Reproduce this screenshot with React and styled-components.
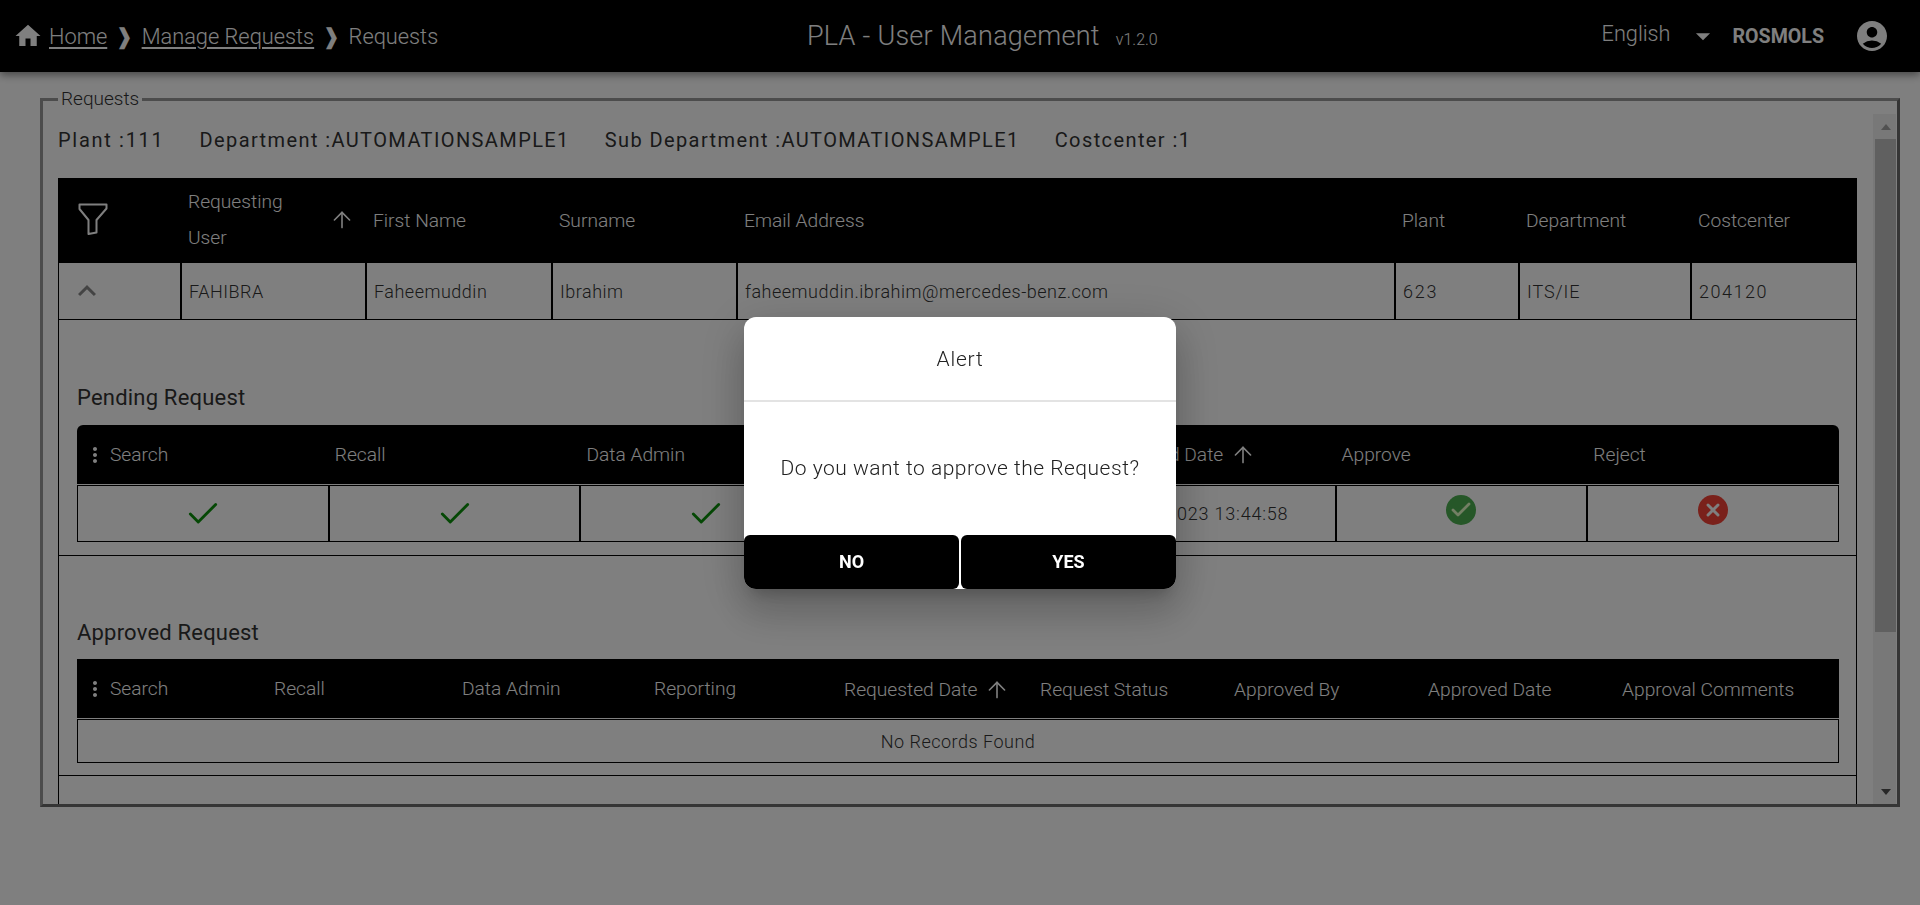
import React from 'react';
import styled, { createGlobalStyle } from 'styled-components';
import { MdHome, MdArrowDropDown, MdAccountCircle, MdExpandLess, MdMoreVert } from 'react-icons/md';
import { ArrowUp, Check, X } from 'lucide-react';

const GlobalStyle = createGlobalStyle`
  html, body {
    margin: 0;
    height: 100%;
    overflow: hidden;
    background: #fff;
  }
  * {
    box-sizing: border-box;
  }
  body {
    font-family: Roboto, "Liberation Sans", sans-serif;
    font-weight: 300;
    color: #333;
  }
`;

const TopBar = styled.header`
  height: 72px;
  background: #000;
  color: #fff;
  display: flex;
  align-items: center;
  box-shadow: 0 3px 8px rgba(0, 0, 0, 0.45);
  position: relative;
`;

const Crumbs = styled.nav`
  flex: 0 0 807px;
  display: flex;
  align-items: center;
  padding-left: 13px;
  font-size: 21.8px;
`;

const CrumbLink = styled.a`
  color: inherit;
  text-decoration: underline;
  text-decoration-thickness: 2px;
  text-underline-offset: 3px;
  margin-left: ${(p) => p.$gap || 0}px;
`;

const CrumbSep = styled.span`
  font-family: "DejaVu Sans", sans-serif;
  font-size: 22px;
  margin: 0 8.2px;
`;

const AppTitle = styled.div`
  display: flex;
  align-items: baseline;
  font-size: 27px;
  letter-spacing: 0.25px;
  white-space: nowrap;
`;

const Version = styled.span`
  font-size: 16px;
  letter-spacing: 0;
  margin-left: 16px;
`;

const UserArea = styled.div`
  margin-left: auto;
  display: flex;
  align-items: center;
  padding-right: 30px;
`;

const Lang = styled.span`
  font-size: 21.7px;
  margin-bottom: 6px;
`;

const LangCaret = styled(MdArrowDropDown)`
  margin-left: 15px;
`;

const UserName = styled.span`
  font-size: 19.6px;
  font-weight: 700;
  margin: 0 30px 0 13px;
`;

const Page = styled.main`
  padding: 17px 20px 0 40px;
`;

const Frame = styled.fieldset`
  margin: 0;
  padding: 0 1px 0 15px;
  height: 718px;
  min-width: 0;
  border-width: 3px;
  border-style: solid;
  border-color: #999 #6a6a6a #6a6a6a #999;
`;

const FrameTitle = styled.legend`
  padding: 0 3px;
  font-size: 19px;
  line-height: 20px;
`;

const FrameBody = styled.div`
  display: flex;
  height: 690px;
  margin-top: 5px;
`;

const ScrollArea = styled.div`
  flex: 1;
  min-width: 0;
  overflow: hidden;
  padding-right: 16px;
`;

const ScrollTrack = styled.div`
  flex: 0 0 23px;
  display: flex;
  flex-direction: column;
  align-items: stretch;
  background: #f1f1f1;
  padding-left: 2px;
`;

const ScrollBtn = styled.div`
  height: 25px;
  display: flex;
  align-items: center;
  justify-content: center;
  &::after {
    content: '';
    border-left: 5px solid transparent;
    border-right: 5px solid transparent;
    ${(p) => (p.$down ? 'border-top: 6px solid #505050;' : 'border-bottom: 6px solid #a3a3a3;')}
  }
`;

const ScrollThumb = styled.div`
  height: 493px;
  background: #c1c1c1;
  margin-bottom: auto;
`;

const InfoRow = styled.div`
  height: 52px;
  margin-bottom: 12px;
  display: flex;
  align-items: center;
  gap: 35px;
  font-size: 20px;
  font-weight: 400;
`;

const InfoItem = styled.span`
  letter-spacing: ${(p) => p.$spacing || 1.4}px;
`;

const Grid = styled.div`
  display: grid;
  grid-template-columns: ${(p) => p.$cols};
`;

const HeadRow = styled(Grid)`
  height: ${(p) => p.$height}px;
  background: #000;
  color: #fff;
  font-size: 19.2px;
  border-radius: ${(p) => (p.$round ? '6px 6px 0 0' : '0')};
`;

const HeadCell = styled.div`
  display: flex;
  align-items: center;
  padding-left: ${(p) => p.$pad || 6}px;
  padding-top: ${(p) => p.$drop || 0}px;
  white-space: nowrap;
`;

const Stacked = styled.span`
  line-height: 36px;
  white-space: normal;
  width: 120px;
`;

const SortIcon = styled(ArrowUp)`
  flex: none;
  margin-left: ${(p) => p.$gap}px;
`;

const FilterCell = styled(HeadCell)`
  padding-left: 20px;
  padding-bottom: 3px;
`;

const DotsIcon = styled(MdMoreVert)`
  flex: none;
  margin-right: 3px;
  font-size: 24px;
`;

const BodyCell = styled.div`
  display: flex;
  align-items: center;
  justify-content: ${(p) => (p.$center ? 'center' : 'flex-start')};
  padding: 0 6px;
  padding-left: ${(p) => p.$indent || 6}px;
  border: 1px solid #000;
  font-size: 18px;
  letter-spacing: ${(p) => p.$spacing || 0.5}px;
  & + & {
    border-left: ${(p) => (p.$double ? '1px solid #000' : '0')};
  }
`;

const CollapseIcon = styled(MdExpandLess)`
  margin-left: 4px;
  color: #888;
`;

const MainRow = styled(Grid)`
  height: 58px;
`;

const ExpandPanel = styled.div`
  border-left: 1px solid #000;
  border-right: 1px solid #000;
  height: 600px;
`;

const Section = styled.section`
  height: ${(p) => p.$height}px;
  padding: ${(p) => p.$top}px 17px 0 18px;
  border-bottom: 1px solid #000;
`;

const SectionTitle = styled.h3`
  margin: 0 0 ${(p) => p.$gap}px;
  height: 34px;
  line-height: 34px;
  font-size: 22px;
  font-weight: 400;
  letter-spacing: 0.2px;
`;

const SubRow = styled(Grid)`
  height: 57px;
  margin-top: 1px;
`;

const EmptyRow = styled.div`
  height: 44px;
  margin-top: 1px;
  border: 1px solid #000;
  display: flex;
  align-items: center;
  justify-content: center;
  font-size: 18px;
  letter-spacing: 0.5px;
`;

const TickIcon = styled(Check)`
  color: #0a900a;
  margin-top: 1px;
`;

const StatusDot = styled.span`
  width: 30px;
  height: 30px;
  border-radius: 50%;
  display: flex;
  align-items: center;
  justify-content: center;
  background: ${(p) => p.$color};
  color: ${(p) => p.$ink};
  margin-bottom: 8px;
`;

const Overlay = styled.div`
  position: fixed;
  inset: 0;
  background: rgba(0, 0, 0, 0.5);
  display: flex;
  align-items: center;
  justify-content: center;
`;

const Dialog = styled.div`
  width: 432px;
  height: 272px;
  background: #fff;
  border-radius: 12px;
  display: flex;
  flex-direction: column;
  color: #222;
  box-shadow: 0 11px 15px -7px rgba(0, 0, 0, 0.2), 0 24px 38px 3px rgba(0, 0, 0, 0.14),
    0 9px 46px 8px rgba(0, 0, 0, 0.12);
`;

const DialogTitle = styled.div`
  height: 85px;
  padding-top: 2px;
  border-bottom: 2px solid #e3e3e3;
  display: flex;
  align-items: center;
  justify-content: center;
  font-size: 21px;
  letter-spacing: 0.8px;
`;

const DialogBody = styled.div`
  flex: 1;
  display: flex;
  align-items: center;
  justify-content: center;
  font-size: 21px;
  letter-spacing: 0.5px;
`;

const DialogActions = styled.div`
  display: flex;
  gap: 2px;
`;

const DialogBtn = styled.button`
  flex: 1;
  height: 54px;
  border: 0;
  background: #000;
  color: #fff;
  font-family: Roboto, sans-serif;
  font-size: 18px;
  font-weight: 700;
  border-radius: ${(p) => (p.$side === 'left' ? '6px 6px 6px 12px' : '6px 6px 12px 6px')};
`;

const FunnelIcon = () => (
  <svg width="30" height="32" viewBox="0 0 30 32" fill="none" stroke="currentColor" strokeWidth="2" strokeLinejoin="round">
    <path d="M1.5 1.5 H28.5 V5.5 L18.5 17 V29.5 L10.5 31 V17 L1.5 6 Z" />
  </svg>
);

const mainCols = '123px 185px 186px 185px 658px 124px 172px 166px';
const pendingCols = 'repeat(7, 1fr)';
const approvedCols = '191px 188px 192px 190px 196px 194px 194px 194px 224px';

const mainHeads = ['First Name', 'Surname', 'Email Address', 'Plant', 'Department', 'Costcenter'];
const mainValues = [
  { text: 'Faheemuddin' },
  { text: 'Ibrahim' },
  { text: 'faheemuddin.ibrahim@mercedes-benz.com' },
  { text: '623', spacing: 1.8 },
  { text: 'ITS/IE', spacing: 0.9 },
  { text: '204120', spacing: 1.5 },
];
const approvedHeads = ['Request Status', 'Approved By', 'Approved Date', 'Approval Comments'];

const App = () => (
  <>
    <GlobalStyle />
    <TopBar>
      <Crumbs>
        <MdHome size={30} />
        <CrumbLink $gap={6}>Home</CrumbLink>
        <CrumbSep>❱</CrumbSep>
        <CrumbLink>Manage Requests</CrumbLink>
        <CrumbSep>❱</CrumbSep>
        <span>Requests</span>
      </Crumbs>
      <AppTitle>
        PLA - User Management
        <Version>v1.2.0</Version>
      </AppTitle>
      <UserArea>
        <Lang>English</Lang>
        <LangCaret size={34} />
        <UserName>ROSMOLS</UserName>
        <MdAccountCircle size={36} />
      </UserArea>
    </TopBar>

    <Page>
      <Frame>
        <FrameTitle>Requests</FrameTitle>
        <FrameBody>
          <ScrollArea>
            <InfoRow>
              <InfoItem $spacing={1.7}>Plant :111</InfoItem>
              <InfoItem>Department :AUTOMATIONSAMPLE1</InfoItem>
              <InfoItem>Sub Department :AUTOMATIONSAMPLE1</InfoItem>
              <InfoItem>Costcenter :1</InfoItem>
            </InfoRow>

            <HeadRow $cols={mainCols} $height={84}>
              <FilterCell>
                <FunnelIcon />
              </FilterCell>
              <HeadCell $pad={7}>
                <Stacked>Requesting User</Stacked>
                <SortIcon size={26} strokeWidth={1.5} $gap={21} />
              </HeadCell>
              {mainHeads.map((h) => (
                <HeadCell key={h} $pad={7} $drop={1}>
                  {h}
                </HeadCell>
              ))}
            </HeadRow>
            <MainRow $cols={mainCols}>
              <BodyCell>
                <CollapseIcon size={36} />
              </BodyCell>
              <BodyCell $indent={7}>FAHIBRA</BodyCell>
              {mainValues.map((v) => (
                <BodyCell key={v.text} $indent={7} $spacing={v.spacing}>
                  {v.text}
                </BodyCell>
              ))}
            </MainRow>

            <ExpandPanel>
              <Section $height={236} $top={61}>
                <SectionTitle $gap={10}>Pending Request</SectionTitle>
                <HeadRow $cols={pendingCols} $height={59} $round>
                  <HeadCell>
                    <DotsIcon />
                    Search
                  </HeadCell>
                  <HeadCell>Recall</HeadCell>
                  <HeadCell>Data Admin</HeadCell>
                  <HeadCell>Reporting</HeadCell>
                  <HeadCell>
                    Requested Date
                    <SortIcon size={26} strokeWidth={1.5} $gap={7} />
                  </HeadCell>
                  <HeadCell>Approve</HeadCell>
                  <HeadCell>Reject</HeadCell>
                </HeadRow>
                <SubRow $cols={pendingCols}>
                  {['search', 'recall', 'admin', 'reporting'].map((k) => (
                    <BodyCell key={k} $center $double>
                      <TickIcon size={38} strokeWidth={1.8} />
                    </BodyCell>
                  ))}
                  <BodyCell $double $indent={28} $spacing={0.8}>
                    13.01.2023 13:44:58
                  </BodyCell>
                  <BodyCell $center $double>
                    <StatusDot $color="#4caf50" $ink="#e6ffc8">
                      <Check size={24} strokeWidth={2.8} />
                    </StatusDot>
                  </BodyCell>
                  <BodyCell $center $double>
                    <StatusDot $color="#f44336" $ink="#fff">
                      <X size={20} strokeWidth={3.5} />
                    </StatusDot>
                  </BodyCell>
                </SubRow>
              </Section>

              <Section $height={220} $top={60}>
                <SectionTitle $gap={9}>Approved Request</SectionTitle>
                <HeadRow $cols={approvedCols} $height={59}>
                  <HeadCell>
                    <DotsIcon />
                    Search
                  </HeadCell>
                  <HeadCell>Recall</HeadCell>
                  <HeadCell>Data Admin</HeadCell>
                  <HeadCell>Reporting</HeadCell>
                  <HeadCell $drop={2}>
                    Requested Date
                    <SortIcon size={26} strokeWidth={1.5} $gap={7} />
                  </HeadCell>
                  {approvedHeads.map((h) => (
                    <HeadCell key={h} $drop={2}>
                      {h}
                    </HeadCell>
                  ))}
                </HeadRow>
                <EmptyRow>No Records Found</EmptyRow>
              </Section>
            </ExpandPanel>
          </ScrollArea>
          <ScrollTrack>
            <ScrollBtn />
            <ScrollThumb />
            <ScrollBtn $down />
          </ScrollTrack>
        </FrameBody>
      </Frame>
    </Page>

    <Overlay>
      <Dialog>
        <DialogTitle>Alert</DialogTitle>
        <DialogBody>Do you want to approve the Request?</DialogBody>
        <DialogActions>
          <DialogBtn $side="left">NO</DialogBtn>
          <DialogBtn $side="right">YES</DialogBtn>
        </DialogActions>
      </Dialog>
    </Overlay>
  </>
);

export default App;
